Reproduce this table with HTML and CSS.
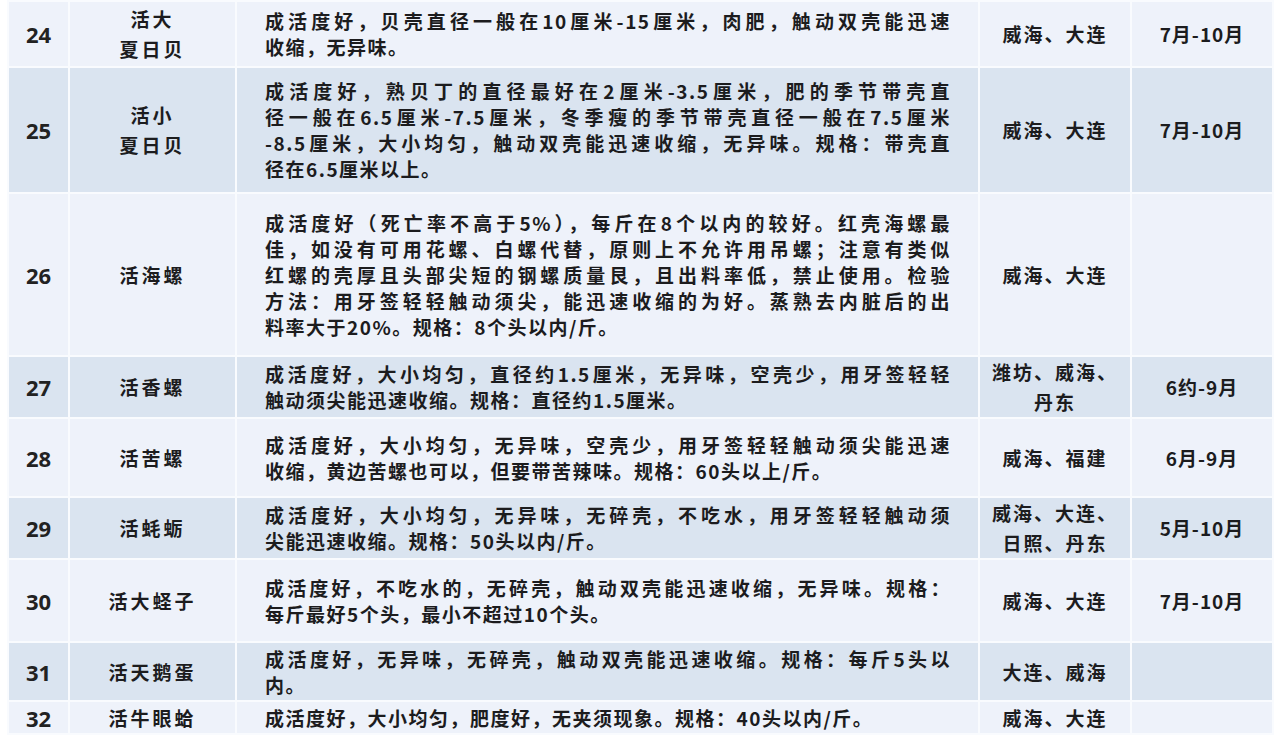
FILE: index.html
```html
<!DOCTYPE html>
<html lang="zh-CN">
<head>
<meta charset="utf-8">
<title>海产品规格表</title>
<link rel="stylesheet" href="styles.css">
</head>
<body>
<table class="spec">
  <colgroup>
    <col class="c-no"><col class="c-name"><col class="c-desc"><col class="c-orig"><col class="c-season">
  </colgroup>
  <tbody>
    <tr class="light r24">
      <td class="no">24</td>
      <td class="name">活大<br>夏日贝</td>
      <td class="desc"><span class="ln j">成活度好，贝壳直径一般在10厘米-15厘米，肉肥，触动双壳能迅速</span><span class="ln">收缩，无异味。</span></td>
      <td class="orig">威海、大连</td>
      <td class="season">7月-10月</td>
    </tr>
    <tr class="dark r25">
      <td class="no">25</td>
      <td class="name">活小<br>夏日贝</td>
      <td class="desc"><span class="ln j">成活度好，熟贝丁的直径最好在2厘米-3.5厘米，肥的季节带壳直</span><span class="ln j">径一般在6.5厘米-7.5厘米，冬季瘦的季节带壳直径一般在7.5厘米</span><span class="ln j">-8.5厘米，大小均匀，触动双壳能迅速收缩，无异味。规格：带壳直</span><span class="ln">径在6.5厘米以上。</span></td>
      <td class="orig">威海、大连</td>
      <td class="season">7月-10月</td>
    </tr>
    <tr class="light r26">
      <td class="no">26</td>
      <td class="name">活海螺</td>
      <td class="desc"><span class="ln j">成活度好（死亡率不高于5%），每斤在8个以内的较好。红壳海螺最</span><span class="ln j">佳，如没有可用花螺、白螺代替，原则上不允许用吊螺；注意有类似</span><span class="ln j">红螺的壳厚且头部尖短的钢螺质量艮，且出料率低，禁止使用。检验</span><span class="ln j">方法：用牙签轻轻触动须尖，能迅速收缩的为好。蒸熟去内脏后的出</span><span class="ln">料率大于20%。规格：8个头以内/斤。</span></td>
      <td class="orig">威海、大连</td>
      <td class="season"></td>
    </tr>
    <tr class="dark r27">
      <td class="no">27</td>
      <td class="name">活香螺</td>
      <td class="desc"><span class="ln j">成活度好，大小均匀，直径约1.5厘米，无异味，空壳少，用牙签轻轻</span><span class="ln">触动须尖能迅速收缩。规格：直径约1.5厘米。</span></td>
      <td class="orig">潍坊、威海、<br>丹东</td>
      <td class="season">6约-9月</td>
    </tr>
    <tr class="light r28">
      <td class="no">28</td>
      <td class="name">活苦螺</td>
      <td class="desc"><span class="ln j">成活度好，大小均匀，无异味，空壳少，用牙签轻轻触动须尖能迅速</span><span class="ln">收缩，黄边苦螺也可以，但要带苦辣味。规格：60头以上/斤。</span></td>
      <td class="orig">威海、福建</td>
      <td class="season">6月-9月</td>
    </tr>
    <tr class="dark r29">
      <td class="no">29</td>
      <td class="name">活蚝蛎</td>
      <td class="desc"><span class="ln j">成活度好，大小均匀，无异味，无碎壳，不吃水，用牙签轻轻触动须</span><span class="ln">尖能迅速收缩。规格：50头以内/斤。</span></td>
      <td class="orig">威海、大连、<br>日照、丹东</td>
      <td class="season">5月-10月</td>
    </tr>
    <tr class="light r30">
      <td class="no">30</td>
      <td class="name">活大蛏子</td>
      <td class="desc"><span class="ln j">成活度好，不吃水的，无碎壳，触动双壳能迅速收缩，无异味。规格：</span><span class="ln">每斤最好5个头，最小不超过10个头。</span></td>
      <td class="orig">威海、大连</td>
      <td class="season">7月-10月</td>
    </tr>
    <tr class="dark r31">
      <td class="no">31</td>
      <td class="name">活天鹅蛋</td>
      <td class="desc"><span class="ln j">成活度好，无异味，无碎壳，触动双壳能迅速收缩。规格：每斤5头以</span><span class="ln">内。</span></td>
      <td class="orig">大连、威海</td>
      <td class="season"></td>
    </tr>
    <tr class="light r32">
      <td class="no">32</td>
      <td class="name">活牛眼蛤</td>
      <td class="desc"><span class="ln">成活度好，大小均匀，肥度好，无夹须现象。规格：40头以内/斤。</span></td>
      <td class="orig">威海、大连</td>
      <td class="season"></td>
    </tr>
  </tbody>
</table>
</body>
</html>
```
FILE: styles.css
```css
html, body {
  margin: 0;
  padding: 0;
  background: #ffffff;
}

body {
  font-family: "Noto Sans CJK SC", "Noto Sans", sans-serif;
  color: #1c1c1e;
  overflow: hidden;
}

.spec {
  margin-left: 7px;
  width: 1265px;
  border-collapse: collapse;
  table-layout: fixed;
}

.c-no { width: 61px; }
.c-name { width: 167px; }
.c-desc { width: 743px; }
.c-orig { width: 152px; }
.c-season { width: 142px; }

.spec td {
  border: 2px solid #f9fbfe;
  padding: 0;
  vertical-align: middle;
  text-align: center;
  font-weight: 700;
  font-size: 19px;
  line-height: 26px;
}

.light td { background: #eef2fa; }
.dark td { background: #dae4f0; }

.r24 { height: 66px; }
.r25 { height: 126px; }
.r26 { height: 163px; }
.r27 { height: 59px; }
.r28 { height: 79px; }
.r29 { height: 62px; }
.r30 { height: 83px; }
.r31 { height: 59px; }
.r32 { height: 33px; }

.spec td.no {
  font-family: "Open Sans", "Noto Sans", sans-serif;
  font-size: 22px;
  color: #222;
}

.spec td.name {
  letter-spacing: 3px;
  line-height: 30px;
}

.spec td.desc {
  text-align: left;
  padding: 0 27px 0 28px;
  letter-spacing: 1.5px;
}

.ln { display: block; }
.ln.j {
  text-align: justify;
  text-align-last: justify;
}

.spec td.orig {
  letter-spacing: 2px;
  line-height: 30px;
}

.spec td.season {
  font-family: "Noto Sans CJK SC", sans-serif;
  letter-spacing: 1px;
}
```
